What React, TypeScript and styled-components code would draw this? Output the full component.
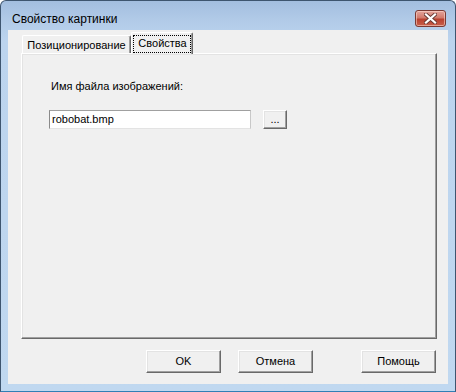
import React from "react";
import styled, { createGlobalStyle } from "styled-components";

const Global = createGlobalStyle`
  html, body { margin: 0; padding: 0; background: #ffffff; }
  body { font-family: "Liberation Sans", Arial, sans-serif; }
  * { box-sizing: border-box; }
`;

const Window = styled.div`
  width: 456px;
  height: 392px;
  border: 1px solid #3e556f;
  border-bottom-color: #2f7fb5;
  border-radius: 6px 6px 0 0;
  background: linear-gradient(180deg, #a3bedf 0px, #b2cbe8 20px, #bcd4ee 40px, #c0d8f0 100%);
  display: flex;
  flex-direction: column;
  overflow: hidden;
`;

const TitleBar = styled.div`
  height: 29px;
  flex: none;
  display: flex;
  align-items: flex-start;
  justify-content: space-between;
  padding: 9px 9px 0 11px;
`;

const Title = styled.span`
  font-family: "Liberation Sans", Arial, sans-serif;
  font-size: 12px;
  line-height: 15px;
  margin-top: 2px;
  color: #000000;
`;

const CloseButton = styled.div`
  width: 31px;
  height: 17px;
  border: 1px solid #7a3a33;
  border-radius: 3px;
  background: linear-gradient(180deg, #e3a49b 0%, #d27a6c 45%, #b9412f 55%, #c8604c 100%);
  box-shadow: inset 0 0 0 1px rgba(255, 220, 210, 0.55);
  display: flex;
  align-items: center;
  justify-content: center;
`;

const Client = styled.div`
  flex: 1;
  margin: 0 7px 7px 7px;
  background: #f0f0f0;
  display: flex;
  flex-direction: column;
  padding: 2px 11px 0 13px;
`;

const TabStrip = styled.div`
  height: 21px;
  display: flex;
  align-items: flex-end;
  padding-left: 1px;
`;

const Tab = styled.div<{ $active?: boolean }>`
  position: relative;
  z-index: ${(p) => (p.$active ? 2 : 1)};
  height: ${(p) => (p.$active ? 22 : 18)}px;
  width: ${(p) => (p.$active ? 62 : 109)}px;
  margin-bottom: ${(p) => (p.$active ? -1 : 0)}px;
  background: #f0f0f0;
  border-top: 1px solid #ffffff;
  border-left: 1px solid #ffffff;
  border-right: 1px solid #696969;
  box-shadow: inset -1px 0 0 #a0a0a0;
  border-radius: 2px 2px 0 0;
  display: flex;
  align-items: ${(p) => (p.$active ? "flex-start" : "center")};
  justify-content: center;
  padding-top: ${(p) => (p.$active ? 3 : 0)}px;
  font-size: 11px;
  color: #000000;
`;

const FocusLabel = styled.span`
  outline: 1px dotted #000000;
  outline-offset: 0;
  padding: 1px 3px 2px 4px;
  line-height: 13px;
`;

const Panel = styled.div`
  height: 286px;
  background: #f0f0f0;
  border-top: 1px solid #ffffff;
  border-left: 1px solid #ffffff;
  border-right: 1px solid #696969;
  border-bottom: 1px solid #696969;
  box-shadow: inset -1px -1px 0 #a0a0a0, inset 1px 1px 0 #e3e3e3;
  padding: 26px 0 0 27px;
  display: flex;
  flex-direction: column;
  align-items: flex-start;
`;

const Label = styled.div`
  font-size: 11px;
  line-height: 13px;
  margin-left: 2px;
  color: #000000;
`;

const FieldRow = styled.div`
  margin-top: 17px;
  display: flex;
  align-items: flex-start;
  gap: 12px;
`;

const TextBox = styled.div`
  width: 202px;
  height: 19px;
  background: #ffffff;
  border-top: 1px solid #a0a0a0;
  border-left: 1px solid #8a8a8a;
  border-right: 1px solid #c8c8c8;
  border-bottom: 1px solid #e3e3e3;
  font-size: 11px;
  line-height: 17px;
  padding-left: 2px;
  color: #000000;
`;

const Button = styled.div<{ $w: number }>`
  width: ${(p) => p.$w}px;
  height: ${(p) => (p.$w < 40 ? 19 : 23)}px;
  background: #f0f0f0;
  border-top: 1px solid #ffffff;
  border-left: 1px solid #ffffff;
  border-right: 1px solid #696969;
  border-bottom: 1px solid #696969;
  box-shadow: inset -1px -1px 0 #a0a0a0, inset 1px 1px 0 #e3e3e3;
  display: flex;
  align-items: center;
  justify-content: center;
  font-size: 11px;
  color: #000000;
  line-height: 13px;
`;

const ButtonRow = styled.div`
  margin-top: 11px;
  display: flex;
  justify-content: flex-end;
  padding-right: 1px;
  gap: 17px;
`;

const Spacer = styled.div`
  width: 14px;
`;

const CloseGlyph = () => (
  <svg width="13" height="11" viewBox="0 0 13 11">
    <path d="M2 1.5 L11 9.5 M11 1.5 L2 9.5" stroke="#6b3b35" strokeWidth="4" strokeLinecap="square" fill="none" />
    <path d="M2 1.5 L11 9.5 M11 1.5 L2 9.5" stroke="#ffffff" strokeWidth="2.2" strokeLinecap="square" fill="none" />
  </svg>
);

export default function App() {
  return (
    <>
      <Global />
      <Window>
        <TitleBar>
          <Title>Свойство картинки</Title>
          <CloseButton>
            <CloseGlyph />
          </CloseButton>
        </TitleBar>
        <Client>
          <TabStrip>
            <Tab>Позиционирование</Tab>
            <Tab $active>
              <FocusLabel>Свойства</FocusLabel>
            </Tab>
          </TabStrip>
          <Panel>
            <Label>Имя файла изображений:</Label>
            <FieldRow>
              <TextBox>robobat.bmp</TextBox>
              <Button $w={24}>...</Button>
            </FieldRow>
          </Panel>
          <ButtonRow>
            <Button $w={75}>OK</Button>
            <Button $w={75}>Отмена</Button>
            <Spacer />
            <Button $w={75}>Помощь</Button>
          </ButtonRow>
        </Client>
      </Window>
    </>
  );
}
